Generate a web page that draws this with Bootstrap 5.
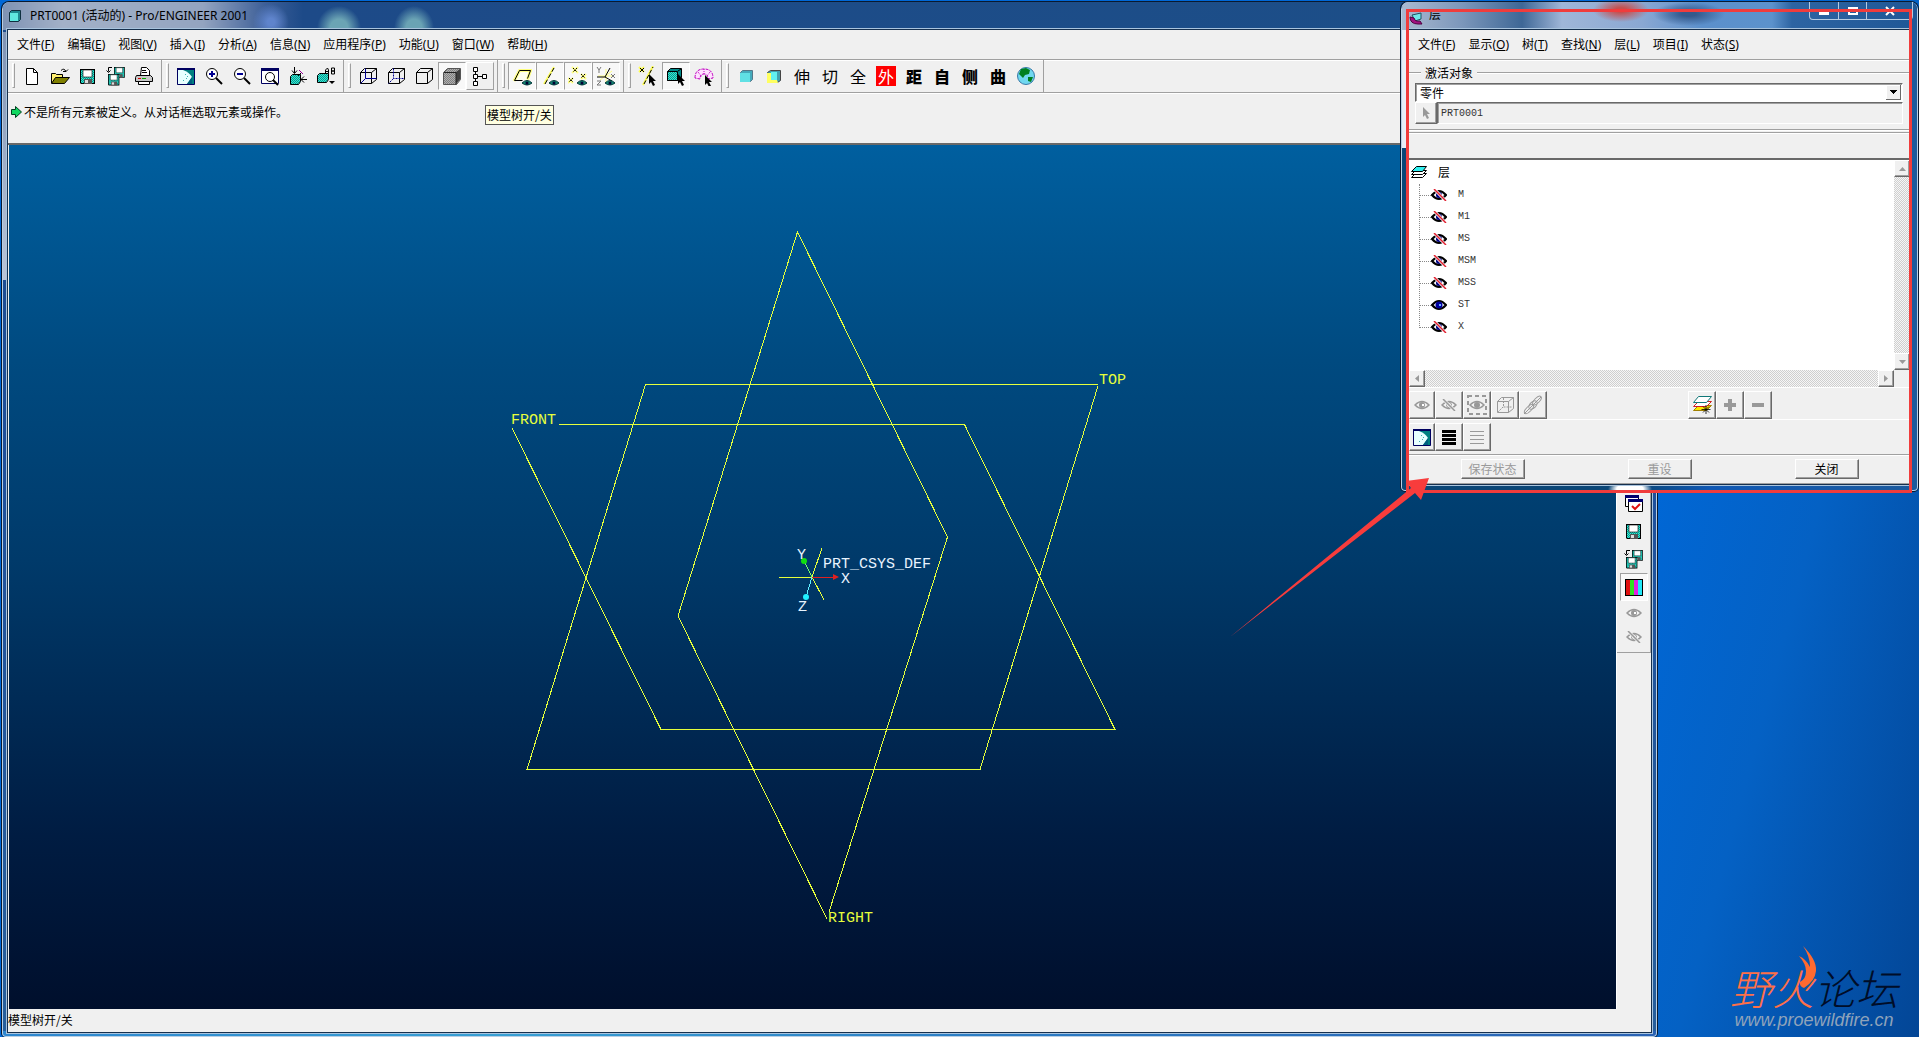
<!DOCTYPE html>
<html lang="zh-CN">
<head>
<meta charset="utf-8">
<meta name="viewport" content="width=device-width, initial-scale=1">
<title>PRT0001 (活动的) - Pro/ENGINEER 2001</title>
<link href="https://cdn.jsdelivr.net/npm/bootstrap@5.3.0/dist/css/bootstrap.min.css" rel="stylesheet">
<style>
:root{--face:#f0f0f0;--shade:#a0a0a0;--dark:#696969;--wire:#e6ff3c;--red:#f03c3c}
body{font:12px/16px "Noto Sans","Noto Sans CJK SC",sans-serif;color:#000;background:#0459b8}
.cjk{font-family:"Noto Sans CJK SC",sans-serif}
button{font:inherit;color:inherit;background:none;border:0;padding:0}
svg{display:block;flex:none}
.desktop{background:linear-gradient(105deg,#0068d8 80%,#0461c4 89%,#034696 100%)}
.aero{border-radius:7px 7px 4px 4px}
.aero{box-shadow:0 0 0 1px #0a1a30,inset 0 0 0 1px #b9cfe4}
.main-win{left:2px;top:2px;right:262px;bottom:0;padding:0 6px 5px;
 background:linear-gradient(#7f93b4,#b9c4d6) 1px 30px/5px 248px no-repeat,
 linear-gradient(90deg,#2d86cf,#38a0d4 30%,#2b7cc4 60%,#2a62b4) 0 100%/100% 6px no-repeat,
 linear-gradient(#1c4a88,#1d4f9c 45%,#265f9c)}
.main-title{height:28px;margin:0 -5px;padding-left:5px;border-radius:6px 6px 0 0;
 background:radial-gradient(ellipse 22px 22px at 336px 26px,#6ba4b4 40%,transparent),
 radial-gradient(ellipse 20px 22px at 411px 26px,#6aa3b4 40%,transparent),
 radial-gradient(ellipse 18px 18px at 268px 20px,#5f84cc 20%,transparent),
 linear-gradient(90deg,#7f93b4,#a3b1c8 60px,#93a4c0 200px,#3d5f98 262px,#1d4a88 300px,#1c4f88)}
.client{background:var(--face);box-shadow:0 0 0 1px #16304e,0 0 0 2px #a9c4de}
.menu{height:29px;padding:1px 9px 0;gap:13px}
.strip{border-top:1px solid var(--shade);box-shadow:inset 0 1px #fff}
.tool-group{padding:2px 3px 2px 10px;border-right:1px solid var(--shade);position:relative}
.tool-group::before{content:"";position:absolute;left:4px;top:3px;bottom:4px;width:3px;border:1px solid #fff;border-right-color:var(--shade);border-bottom-color:var(--shade)}
.tool{width:28px;height:28px;display:flex;align-items:center;justify-content:center;border:1px solid transparent}
.tool.down{border-color:var(--shade) #fff #fff var(--shade);background:#f8f8f8}
.tool.up{border-color:#fff var(--shade) var(--shade) #fff}
.glyph{font-size:16px;line-height:20px}
.glyph.heavy{font-weight:900}
.glyph span{display:block;width:20px}
.glyph .hot{background:#f00;color:#fff}
.message{height:53px;padding:11px 2px 0;border-top:1px solid var(--shade);border-bottom:2px solid var(--dark);box-shadow:inset 0 1px #fff}
.hint{left:477px;top:12px;height:20px;padding:1px;line-height:16px;background:#ffffe1;border:1px solid #555}
.view{margin-left:1px;background:linear-gradient(#005f9f,#004a80 25%,#003a6a 48%,#001c42 80%,#000f2c)}
.view text{font-family:"Liberation Mono",monospace;font-size:15px}
.side{width:35px;border-left:1px solid #fff}
.side-tools{padding:344px 3px 3px;border-bottom:1px solid var(--shade);border-right:1px solid var(--shade)}
.side-tools .short-btn{height:24px}
.status{height:23px;padding-top:3px}
.dialog{right:1px;top:2px;width:517px;padding:0 8px 7px;
 background:linear-gradient(90deg,#e4ecf6,#eef3fa) 1px 28px/7px 118px no-repeat,
 radial-gradient(ellipse 22px 9px at 229px 487px,#fff 60%,transparent),
 linear-gradient(90deg,#0b4676 0,#0b4676 45%,#1058b4 60%,#1c5a9c)}
.dlg-title{height:28px;margin:0 -7px;padding-left:7px;border-radius:6px 6px 0 0;
 background:radial-gradient(ellipse 28px 12px at 219px 8px,#c4504f 20%,transparent),
 radial-gradient(ellipse 36px 12px at 287px 12px,#33598c 20%,transparent),
 linear-gradient(90deg,#a9b9d0,#7c97bb 60px,#3e6796 120px,#9fb6d8 160px,#8aa8d2 240px,#5b90cc 300px,#5c92cc 370px,#2d64a2 390px,#1f5796)}
.caption{height:18px;margin-right:4px;border:1px solid #b5cbe2;border-top:0;border-radius:0 0 4px 4px;color:#fff}
.caption button{width:28px;display:flex;justify-content:center;align-items:center}
.caption button+button{border-left:1px solid #b5cbe2}
.caption button:last-child{width:46px}
.red-frame{left:5px;top:7px;right:6px;bottom:-2px;border:3px solid var(--red);pointer-events:none}
.active-set{border-top:1px solid var(--shade);box-shadow:inset 0 1px #fff;margin-top:12px;padding:10px 7px 5px 6px;position:relative}
.active-set legend{position:absolute;left:12px;top:-9px;width:auto;margin:0;padding:0 4px;font-size:12px;line-height:18px;background:var(--face)}
.sunken{border:1px solid;border-color:var(--dark) #fff #fff var(--dark);box-shadow:inset 1px 1px var(--shade)}
.drop{position:relative}
.drop select{appearance:none;width:100%;height:19px;padding:0 4px;background:#fff;border-radius:0;font:inherit;color:#000;line-height:15px}
.drop::after{content:"";position:absolute;right:2px;top:2px;width:15px;height:15px;pointer-events:none;
 background:linear-gradient(#000,#000) 4px 5px/7px 1px no-repeat,linear-gradient(#000,#000) 5px 6px/5px 1px no-repeat,linear-gradient(#000,#000) 6px 7px/3px 1px no-repeat,linear-gradient(#000,#000) 7px 8px/1px 1px no-repeat,var(--face);
 box-shadow:inset -1px -1px var(--dark),inset 1px 1px #fff}
.part{height:22px;min-width:0;padding:0 3px;background:var(--face);border-radius:0;outline:0;font:10px/16px "Liberation Mono",monospace;color:#333}
.raised{background:var(--face);border:1px solid;border-color:#fff var(--dark) var(--dark) #fff;box-shadow:inset -1px -1px var(--shade);display:flex;align-items:center;justify-content:center}
.raised:disabled{color:#9a9a9a}
.pick{width:22px;height:22px}
.panel{height:28px;margin-top:2px;border-top:1px solid var(--shade);border-bottom:2px solid var(--dark);box-shadow:inset 0 1px #fff}
.tree{height:210px;background:#fff;overflow:hidden}
.tree ul{margin:0 0 0 10px;padding:0;list-style:none;position:relative}
.tree ul::before{content:"";position:absolute;left:0;top:0;height:144px;border-left:1px dotted #888}
.tree li{height:22px;display:flex;align-items:center;font:10px/16px "Liberation Mono",monospace;color:#333}
.tree li::before{content:"";width:12px;border-top:1px dotted #888}
.tree li svg{margin-right:11px}
.tree-root{height:24px;gap:10px;padding-left:1px}
.track{background:repeating-conic-gradient(#cfcfcf 0 25%,#f6f6f6 0 50%) 0 0/2px 2px}
.track button{width:16px;height:17px;color:#8a8a8a}
.layer-tools{border-top:1px solid #fff;padding-top:3px}
.layer-tools .raised{width:28px;height:28px}
.layer-tools .raised.edge{width:26px}
.left-tools{width:279px}
.actions{margin-top:3px;padding:4px 0;border-top:1px solid var(--shade);border-bottom:1px solid var(--shade);box-shadow:inset 0 1px #fff}
.actions .raised{width:64px;height:20px}
.arrow{left:1225px;top:470px}
.brand{right:20px;bottom:7px;width:170px;text-align:center}
.brand-name{font:italic 300 42px/46px "Noto Sans CJK SC",sans-serif;color:#000d28}
.brand-name b{font-weight:300;color:#ff7048}
.brand-flame{left:68px;top:-18px}
.brand-url{font:italic 18px/20px "Liberation Sans",sans-serif;color:#8fa3ba;text-decoration:none}
</style>
<script src="https://cdn.jsdelivr.net/npm/bootstrap@5.3.0/dist/js/bootstrap.bundle.min.js"></script>
</head>
<body class="desktop vh-100 overflow-hidden position-relative">

<svg width="0" height="0" class="position-absolute" aria-hidden="true">
<defs>
<pattern id="teal" width="2" height="2" patternUnits="userSpaceOnUse"><rect width="2" height="2" fill="#40e0d0"/><path d="M0 0h1v1H0zM1 1h1v1H1z" fill="#00a090"/></pattern>
<pattern id="grey" width="2" height="2" patternUnits="userSpaceOnUse"><rect width="2" height="2" fill="#b0b0b0"/><path d="M0 0h1v1H0zM1 1h1v1H1z" fill="#808080"/></pattern>
<g id="disk"><path d="M0 0h15v15H1l-1-1z" fill="#000"/><path d="M1 1h13v13H1z" fill="url(#teal)"/><path d="M3 1h9v7H3z" fill="#fff" stroke="#000" stroke-width=".6"/><path d="M4 10h8v5H4z" fill="#555"/><path d="M5 11h3v3H5z" fill="#ddd"/></g>
<symbol id="new" viewBox="0 0 20 20"><path d="M4.500 2.500h7l4 4v12h-11z" fill="#fff" stroke="#000"/><path d="M11.500 2.500v4h4" fill="none" stroke="#000"/></symbol>
<symbol id="open" viewBox="0 0 20 20"><path d="M1.500 17V7.500h4l1 1h6v3" fill="#ffef70" stroke="#000"/><path d="M1.500 17.500l4-6h14l-5 6z" fill="#808000" stroke="#000"/><path d="M11 4.500q3-3 5 1l2-2m-2 2h-3" fill="none" stroke="#000"/></symbol>
<symbol id="save" viewBox="0 0 20 20"><use href="#disk" x="2" y="3"/></symbol>
<symbol id="saveas" viewBox="0 0 20 20"><g transform="translate(8 1) scale(.72)"><use href="#disk"/></g><g transform="translate(2 8) scale(.76)"><use href="#disk"/></g><path d="M6 1.500H2.500v4M.500 4.500l2 2 2-2" fill="none" stroke="#000"/></symbol>
<symbol id="print" viewBox="0 0 20 20"><path d="M6.500 9.500l1-8h5l3 3v5" fill="#fff" stroke="#000"/><path d="M8 4.500h4M8 6.500h5" stroke="#000"/><path d="M2.500 9.500h14l2 2v4h-17v-4z" fill="#c8c8c8" stroke="#000"/><path d="M4.500 15.500h11v3h-11z" fill="#fff" stroke="#000"/><path d="M4 12.500h3" stroke="#d00"/><path d="M8 12.500h4" stroke="#0a0"/></symbol>
<symbol id="repaint" viewBox="0 0 20 20"><path d="M1.500 2.500h17v16h-17z" fill="#008080" stroke="#000060" stroke-width="1"/><path d="M1 2h18v2H1z" fill="#000060"/><path d="M2 4h5q6 2 9 7l-5 7H2z" fill="#e8ffff"/><path d="M11 18l5-7v7z" fill="#006080"/><path d="M9 8h1v1H9zM11 10h1v1h-1zM10 12h1v1h-1zM7 14h1v1H7z" fill="#40b0b0"/></symbol>
<symbol id="zoomin" viewBox="0 0 20 20"><circle cx="8" cy="8" r="5.500" fill="#fff" stroke="#000"/><path d="M8 5v6M5 8h6" stroke="#000090" stroke-width="2"/><path d="M12 12l6 6" stroke="#000" stroke-width="2"/></symbol>
<symbol id="zoomout" viewBox="0 0 20 20"><circle cx="8" cy="8" r="5.500" fill="#fff" stroke="#000"/><path d="M5 8h6" stroke="#000090" stroke-width="2"/><path d="M12 12l6 6" stroke="#000" stroke-width="2"/></symbol>
<symbol id="refit" viewBox="0 0 20 20"><path d="M1.500 2.500h17v15h-17z" fill="#fff" stroke="#000060"/><path d="M1 2h18v3H1z" fill="#000060"/><circle cx="10" cy="11" r="4.500" fill="#fff" stroke="#000"/><path d="M13 14l5 5" stroke="#000" stroke-width="2"/></symbol>
<symbol id="orient" viewBox="0 0 20 20"><path d="M2.500 10.500l2-2h8v7l-2 3h-8z" fill="url(#teal)" stroke="#000"/><path d="M6.500 1v6M4 4.500l2.500 3 2.500-3M19 13.500h-6m3-3l-3 3 3 3M13 7l-3 3" fill="none" stroke="#000"/><path d="M11 4l4 4" stroke="#909"/></symbol>
<symbol id="views" viewBox="0 0 20 20"><path d="M1.500 9.500l2-2h9v6l-2 3h-9z" fill="url(#teal)" stroke="#000"/><path d="M9.500 7.500V4l2-2 1 2v3.500M9.500 5.500h3M15.500 2v6h3V5h-3 3V2z" fill="none" stroke="#000"/><path d="M13 15h6l-3 3z"/></symbol>
<symbol id="wire" viewBox="0 0 20 20"><path d="M2.500 6.500h11v11h-11zM2.500 6.500l4-4h12l-5 4M18.500 2.500v11l-5 4" fill="none" stroke="#000"/><path d="M7.500 2.500v10h11M7.500 12.500l-5 5" fill="none" stroke="#000090"/></symbol>
<symbol id="hidden" viewBox="0 0 20 20"><path d="M2.500 6.500h11v11h-11zM2.500 6.500l4-4h12l-5 4M18.500 2.500v11l-5 4" fill="none" stroke="#000"/><path d="M7.500 2.500v10h11M7.500 12.500l-5 5" fill="none" stroke="#000090" stroke-dasharray="2 1"/></symbol>
<symbol id="nohidden" viewBox="0 0 20 20"><path d="M2.500 6.500h11v11h-11zM2.500 6.500l4-4h12l-5 4M18.500 2.500v11l-5 4" fill="none" stroke="#000"/></symbol>
<symbol id="shaded" viewBox="0 0 20 20"><path d="M1.500 6.500l4-4h13v11l-4 5h-13z" fill="url(#grey)" stroke="#555"/><path d="M14 6l4-3v10l-4 5z" fill="#404040"/><path d="M2 6.500h12v12" fill="none" stroke="#222"/></symbol>
<symbol id="treeicon" viewBox="0 0 20 20"><path d="M3.500 1.500h4v4h-4zM3.500 8.500h4v4h-4zM3.500 15.500h4v4h-4zM12.500 8.500h4v4h-4zM5.500 6v2M5.500 13v2M8 10.500h4" fill="#fff" stroke="#000"/></symbol>
<g id="see"><path d="M0 3q5-5 10 0q-5 4-10 0z" fill="#108070" stroke="#003838"/><circle cx="5" cy="3" r="1.500" fill="#003"/></g>
<symbol id="planes" viewBox="0 0 20 20"><path d="M2 15L7.500 4.500h11l-3 9" fill="#fffff0" stroke="#ffff80" stroke-width="3"/><path d="M2.500 14.500l5-10h11l-3 8M2.500 14.500h8" fill="none" stroke="#000"/><use href="#see" x="10" y="14"/></symbol>
<symbol id="axes" viewBox="0 0 20 20"><path d="M4 18L14 1" stroke="#ffff60" stroke-width="2"/><path d="M5 18L14 2" stroke="#000" stroke-dasharray="5 2"/><use href="#see" x="9" y="14"/></symbol>
<symbol id="points" viewBox="0 0 20 20"><path d="M4 1l6 6m0-6L4 7M0 12l5 5m0-5l-5 5M13 8l5 5m0-5l-5 5" stroke="#ffff80" stroke-width="2"/><path d="M5 2l4 4m0-4L5 6M1 12l4 4m0-4l-4 4M13 8l4 4m0-4l-4 4" stroke="#000" stroke-dasharray="2 1"/><use href="#see" x="9" y="14"/></symbol>
<symbol id="csys" viewBox="0 0 20 20"><path d="M10 3v13M4 14l12-9M2 10h14" stroke="#ffff80"/><path d="M9 11l5-9M9 11H1M9 11l7 4" stroke="#000"/><path d="M1 1l2 3 2-3M3 4v3M15 8l4 4m0-4l-4 4M1 15h4l-4 4h4" fill="none" stroke="#777"/><use href="#see" x="9" y="14"/></symbol>
<path id="ptr" d="M0 0l7 7H4l2 4-2 1-2-4-2 2z"/>
<symbol id="pickdatum" viewBox="0 0 20 20"><path d="M5 19L15 0M1 1l5 5m0-5L1 6" stroke="#ffff50" stroke-width="2"/><path d="M6 18L15 1" stroke="#000" stroke-dasharray="4 2"/><path d="M2 2l4 4m0-4L2 6" stroke="#000"/><use href="#ptr" x="11" y="8"/></symbol>
<symbol id="pickbox" viewBox="0 0 20 20"><path d="M1.500 5.500l3-3h11v9l-3 3h-11z" fill="#088" stroke="#000"/><path d="M1.500 5.500h10v9h-10z" fill="url(#teal)" stroke="#000"/><path d="M12 5l3-2" stroke="#000"/><use href="#ptr" x="12" y="8"/></symbol>
<symbol id="pickquilt" viewBox="0 0 20 20"><path d="M1 12Q1 3 10 3q9 0 9 9l-5 1q0-5-4-5t-4 5z" fill="#ffe0ff" stroke="#c000c0" stroke-dasharray="3 1"/><path d="M4 6l4 5M10 3v5M16 6l-3 4" stroke="#c000c0" stroke-dasharray="1 1"/><use href="#ptr" x="11" y="9"/></symbol>
<symbol id="solid" viewBox="0 0 20 20"><path d="M4.500 6.500l2-2h10v9l-2 2h-10z" fill="#4ab" stroke="#578"/><path d="M4 7h10v9H4z" fill="#60e0e4"/></symbol>
<symbol id="solidcut" viewBox="0 0 20 20"><path d="M3.500 6.500l3-2h10v10l-3 2h-10z" fill="#40a0b0" stroke="#444"/><path d="M3 7h4v7h6l1 3H3z" fill="#ffff60"/><path d="M7 6h6v8H7z" fill="#60f0f0"/></symbol>
<symbol id="globe" viewBox="0 0 20 20"><circle cx="10" cy="10" r="8.500" fill="#70d8f0" stroke="#3878a8"/><path d="M5 3l5-1 4 2-1 4-4 1-2 3-4-4zM12 11l5 0-2 5-3-1z" fill="#008020"/></symbol>
<symbol id="eye" viewBox="0 0 16 12"><path d="M1 6q7-8 14 0q-7 8-14 0z" fill="#fff" stroke="#000" stroke-width="2"/><circle cx="8" cy="6" r="3.500" fill="#0000a0"/><path d="M8 5h2v2H8z" fill="#60b0ff"/></symbol>
<symbol id="noeye" viewBox="0 0 16 12"><path d="M1 6q7-8 14 0q-7 8-14 0z" fill="#fff" stroke="#000" stroke-width="2"/><circle cx="8" cy="6" r="3" fill="#000080"/><path d="M3 0l12 12" stroke="#fff" stroke-width="3"/><path d="M3 0l12 12" stroke="#e02030" stroke-width="1.500"/></symbol>
<symbol id="geye" viewBox="0 0 16 12"><path d="M1 6q7-7 14 0q-7 7-14 0z" fill="#f4f4f4" stroke="#999" stroke-width="1.500"/><circle cx="8" cy="6" r="3" fill="#999"/><path d="M8 5h2v2H8z" fill="#fff"/></symbol>
<symbol id="gnoeye" viewBox="0 0 16 12"><path d="M1 6q7-7 14 0q-7 7-14 0z" fill="#f4f4f4" stroke="#999" stroke-width="1.500"/><circle cx="8" cy="6" r="2.500" fill="none" stroke="#999"/><path d="M2 0l12 12" stroke="#f0f0f0" stroke-width="3"/><path d="M2 0l12 12" stroke="#999" stroke-width="1.500"/></symbol>
<symbol id="geyebox" viewBox="0 0 20 20"><path d="M1 1h18v18H1z" fill="none" stroke="#999" stroke-width="2" stroke-dasharray="4 3"/><path d="M3 10q7-7 14 0q-7 7-14 0z" fill="#f4f4f4" stroke="#999" stroke-width="1.500"/><circle cx="10" cy="10" r="3" fill="#999"/></symbol>
<symbol id="gbox" viewBox="0 0 20 20"><path d="M2.500 6.500h11v11h-11zM2.500 6.500l4-4h12l-5 4M18.500 2.500v11l-5 4" fill="none" stroke="#999"/><path d="M8.500 3v9h9M8 12l-5 5" fill="none" stroke="#999" stroke-dasharray="2 1"/></symbol>
<symbol id="glink" viewBox="0 0 20 20"><g fill="none" stroke="#999"><ellipse cx="14" cy="5.500" rx="5.500" ry="2.500" transform="rotate(-45 14 5.500)"/><ellipse cx="6" cy="14" rx="6" ry="2.500" transform="rotate(-45 6 14)"/><ellipse cx="10" cy="10" rx="5" ry="3" transform="rotate(-45 10 10)"/><path d="M1 19L18 2"/></g></symbol>
<symbol id="newlayer" viewBox="0 0 20 20"><path d="M1.500 15.500l5-5h13l-5 5z" fill="#ffe800" stroke="#a08000"/><path d="M1.500 11.500l5-5h13l-5 5z" fill="#fff" stroke="#d02020"/><path d="M1.500 7.500l5-6h13l-5 6z" fill="#fff" stroke="#107878"/><path d="M14 10v9M9.500 14.500h9M11 11.500l6 6m0-6l-6 6" stroke="#000" stroke-width=".8"/></symbol>
<symbol id="layers" viewBox="0 0 18 14"><path d="M1.500 12.500l4-4h11l-4 4z" fill="#fff" stroke="#000"/><path d="M1.500 9.500l4-4h11l-4 4z" fill="#fff" stroke="#000"/><path d="M1.500 6.500l5-5h10l-4 5z" fill="#30f0f0" stroke="#000"/></symbol>
<symbol id="windows" viewBox="0 0 20 20"><path d="M1.500 2.500h13v11h-13z" fill="#fff" stroke="#000"/><path d="M1 2h14v3H1z" fill="#000070"/><path d="M4.500 6.500h14v12h-14z" fill="#fff" stroke="#000"/><path d="M4 6h15v3H4z" fill="#000070"/><path d="M8 13l3 3 5-5" fill="none" stroke="#e01010" stroke-width="2"/></symbol>
<symbol id="bars" viewBox="0 0 20 20"><path d="M1 2h18v17H1z"/><path d="M2 3h4v15H2z" fill="#e01010"/><path d="M6 3h4v15H6z" fill="#30e020"/><path d="M10 3h4v15h-4z" fill="#e020e0"/><path d="M14 3h4v15h-4z" fill="#20e8f8"/></symbol>
</defs>
</svg>

<!-- forum brand on the wallpaper -->
<div class="brand position-absolute">
  <div class="brand-name text-nowrap"><b>野火</b>论坛</div>
  <svg class="brand-flame position-absolute" width="20" height="42" viewBox="0 0 20 42"><path d="M6 0q14 14 13 25q-1 10-12 17q-5-2-4-6q6-3 6-11q0-7-7-15q7 3 11 11q0-11-7-21z" fill="#ff6a30"/></svg>
  <a class="brand-url d-block" href="#">www.proewildfire.cn</a>
</div>

<!-- main application window -->
<main class="main-win aero position-absolute d-flex flex-column">
  <header class="main-title d-flex align-items-center flex-shrink-0">
    <svg width="14" height="14" viewBox="0 0 14 14" class="me-2"><path d="M1.500 3.500l2-2h9v9l-2 2h-9z" fill="#208890" stroke="#103040"/><path d="M2 4h8v8H2z" fill="#60e8e0"/></svg>
    <span>PRT0001 (活动的) - Pro/ENGINEER 2001</span>
  </header>
  <div class="client flex-grow-1 d-flex flex-column">
    <nav class="menu d-flex align-items-center flex-shrink-0">
      <button>文件(<u>F</u>)</button><button>编辑(<u>E</u>)</button><button>视图(<u>V</u>)</button><button>插入(<u>I</u>)</button><button>分析(<u>A</u>)</button><button>信息(<u>N</u>)</button><button>应用程序(<u>P</u>)</button><button>功能(<u>U</u>)</button><button>窗口(<u>W</u>)</button><button>帮助(<u>H</u>)</button>
    </nav>
    <div class="strip d-flex flex-shrink-0" role="toolbar" aria-label="工具栏">
      <div class="tool-group d-flex">
        <button class="tool" aria-label="新建"><svg width="20" height="20"><use href="#new"/></svg></button>
        <button class="tool" aria-label="打开"><svg width="20" height="20"><use href="#open"/></svg></button>
        <button class="tool" aria-label="保存"><svg width="20" height="20"><use href="#save"/></svg></button>
        <button class="tool" aria-label="保存副本"><svg width="20" height="20"><use href="#saveas"/></svg></button>
        <button class="tool" aria-label="打印"><svg width="20" height="20"><use href="#print"/></svg></button>
      </div>
      <div class="tool-group d-flex">
        <button class="tool" aria-label="重画"><svg width="20" height="20"><use href="#repaint"/></svg></button>
        <button class="tool" aria-label="放大"><svg width="20" height="20"><use href="#zoomin"/></svg></button>
        <button class="tool" aria-label="缩小"><svg width="20" height="20"><use href="#zoomout"/></svg></button>
        <button class="tool" aria-label="重新调整"><svg width="20" height="20"><use href="#refit"/></svg></button>
        <button class="tool" aria-label="定向"><svg width="20" height="20"><use href="#orient"/></svg></button>
        <button class="tool" aria-label="视图列表"><svg width="20" height="20"><use href="#views"/></svg></button>
      </div>
      <div class="tool-group d-flex">
        <button class="tool" aria-label="线框"><svg width="20" height="20"><use href="#wire"/></svg></button>
        <button class="tool" aria-label="隐藏线"><svg width="20" height="20"><use href="#hidden"/></svg></button>
        <button class="tool" aria-label="无隐藏线"><svg width="20" height="20"><use href="#nohidden"/></svg></button>
        <button class="tool down" aria-label="着色"><svg width="20" height="20"><use href="#shaded"/></svg></button>
        <button class="tool up" aria-label="模型树"><svg width="20" height="20"><use href="#treeicon"/></svg></button>
      </div>
      <div class="tool-group d-flex">
        <button class="tool down" aria-label="基准平面"><svg width="20" height="20"><use href="#planes"/></svg></button>
        <button class="tool down" aria-label="基准轴"><svg width="20" height="20"><use href="#axes"/></svg></button>
        <button class="tool down" aria-label="基准点"><svg width="20" height="20"><use href="#points"/></svg></button>
        <button class="tool down" aria-label="坐标系"><svg width="20" height="20"><use href="#csys"/></svg></button>
      </div>
      <div class="tool-group d-flex">
        <button class="tool" aria-label="选取基准"><svg width="20" height="20"><use href="#pickdatum"/></svg></button>
        <button class="tool down" aria-label="选取几何"><svg width="20" height="20"><use href="#pickbox"/></svg></button>
        <button class="tool" aria-label="选取面组"><svg width="20" height="20"><use href="#pickquilt"/></svg></button>
      </div>
      <div class="tool-group d-flex cjk">
        <button class="tool" aria-label="伸出项"><svg width="20" height="20"><use href="#solid"/></svg></button>
        <button class="tool" aria-label="切口"><svg width="20" height="20"><use href="#solidcut"/></svg></button>
        <button class="tool glyph"><span>伸</span></button>
        <button class="tool glyph"><span>切</span></button>
        <button class="tool glyph"><span>全</span></button>
        <button class="tool glyph"><span class="hot">外</span></button>
        <button class="tool glyph heavy"><span>距</span></button>
        <button class="tool glyph heavy"><span>自</span></button>
        <button class="tool glyph heavy"><span>侧</span></button>
        <button class="tool glyph heavy"><span>曲</span></button>
        <button class="tool" aria-label="网络"><svg width="20" height="20"><use href="#globe"/></svg></button>
      </div>
    </div>
    <div class="message cjk position-relative flex-shrink-0">
      <div class="d-flex align-items-center">
        <svg width="14" height="14" viewBox="0 0 14 14"><path d="M1.500 4.500h4v-3l6 5.500-6 5.500v-3h-4z" fill="#10d860" stroke="#004020"/></svg>
        <span>不是所有元素被定义。从对话框选取元素或操作。</span>
      </div>
      <div class="hint position-absolute text-nowrap" role="tooltip">模型树开/关</div>
    </div>
    <div class="d-flex flex-grow-1 overflow-hidden">
      <div class="view flex-grow-1 overflow-hidden">
        <svg width="100%" height="100%" viewBox="9 145 1607 864" aria-label="模型视图">
          <g fill="none" stroke="#e6ff3c" shape-rendering="crispEdges">
            <path d="M559 424.500H964.500L1115 729.500H661L512 428"/>
            <path d="M1098 384.500H645.500L527 769.500H980L1098 386"/>
            <path d="M829 912L947.500 537L797.500 232L678 616L827 919"/>
            <path d="M779 577.500H812M812 577L822 548M812 577L824 600"/>
            <path d="M812 577L804 561" stroke="#7f6"/>
            <path d="M812 577.500H834" stroke="#e02020"/>
            <path d="M812 577L806 597" stroke="#60f0ff"/>
          </g>
          <circle cx="804" cy="561" r="3" fill="#10e010"/><circle cx="806" cy="597" r="3" fill="#20f0ff"/><path d="M833 574l6 3-6 3z" fill="#e02020"/>
          <g fill="#e6ff3c"><text x="511" y="424">FRONT</text><text x="1099" y="384">TOP</text><text x="828" y="922">RIGHT</text></g>
          <g fill="#e8f4ff"><text x="823" y="568">PRT_CSYS_DEF</text><text x="797" y="559">Y</text><text x="841" y="583">X</text><text x="798" y="611">Z</text></g>
        </svg>
      </div>
      <aside class="side flex-shrink-0">
        <div class="side-tools d-flex flex-column">
          <button class="tool" aria-label="窗口"><svg width="20" height="20"><use href="#windows"/></svg></button>
          <button class="tool" aria-label="保存"><svg width="20" height="20"><use href="#save"/></svg></button>
          <button class="tool" aria-label="保存副本"><svg width="20" height="20"><use href="#saveas"/></svg></button>
          <button class="tool down" aria-label="颜色"><svg width="20" height="20"><use href="#bars"/></svg></button>
          <button class="tool short-btn" aria-label="显示" disabled><svg width="16" height="12"><use href="#geye"/></svg></button>
          <button class="tool short-btn" aria-label="隐藏" disabled><svg width="16" height="12"><use href="#gnoeye"/></svg></button>
        </div>
      </aside>
    </div>
    <footer class="status cjk flex-shrink-0">模型树开/关</footer>
  </div>
</main>

<!-- layer dialog -->
<section class="dialog aero position-absolute" aria-label="层">
  <header class="dlg-title d-flex">
    <svg width="16" height="16" viewBox="0 0 16 16" class="mt-2"><path d="M3 5l9-2v6l-6 2z" fill="#70e8e8" stroke="#205060"/><path d="M1 7q0 7 8 7h4l-2-3q-5 1-6-3z" fill="#a01080" stroke="#500040"/></svg>
    <span class="cjk ms-1 mt-1">层</span>
    <div class="caption d-flex ms-auto">
      <button aria-label="最小化"><svg width="12" height="10"><path d="M1 6h10v3H1z" fill="#fff"/></svg></button>
      <button aria-label="最大化"><svg width="12" height="10"><path d="M2 2h8v6H2z" fill="none" stroke="#fff" stroke-width="2"/></svg></button>
      <button aria-label="关闭窗口"><svg width="12" height="10"><path d="M2 1l8 8m0-8L2 9" stroke="#fff" stroke-width="2"/></svg></button>
    </div>
  </header>
  <div class="client">
    <nav class="menu d-flex align-items-center">
      <button>文件(<u>F</u>)</button><button>显示(<u>O</u>)</button><button>树(<u>T</u>)</button><button>查找(<u>N</u>)</button><button>层(<u>L</u>)</button><button>项目(<u>I</u>)</button><button>状态(<u>S</u>)</button>
    </nav>
    <div class="strip cjk">
      <fieldset class="active-set">
        <legend>激活对象</legend>
        <div class="drop"><select class="sunken" aria-label="激活对象"><option>零件</option></select></div>
        <div class="d-flex">
          <button class="raised pick" aria-label="选取" disabled><svg width="12" height="14" viewBox="-2 -1 10 14"><use href="#ptr" fill="#999"/></svg></button>
          <input class="part sunken flex-grow-1" aria-label="对象名称" value="PRT0001" readonly>
        </div>
      </fieldset>
    </div>
    <div class="strip"><div class="panel"></div></div>
    <div class="d-flex">
      <div class="tree flex-grow-1">
        <div class="tree-root cjk d-flex align-items-center"><svg width="18" height="14"><use href="#layers"/></svg>层</div>
        <ul>
          <li><svg width="16" height="12"><use href="#noeye"/></svg>M</li>
          <li><svg width="16" height="12"><use href="#noeye"/></svg>M1</li>
          <li><svg width="16" height="12"><use href="#noeye"/></svg>MS</li>
          <li><svg width="16" height="12"><use href="#noeye"/></svg>MSM</li>
          <li><svg width="16" height="12"><use href="#noeye"/></svg>MSS</li>
          <li><svg width="16" height="12"><use href="#eye"/></svg>ST</li>
          <li><svg width="16" height="12"><use href="#noeye"/></svg>X</li>
        </ul>
      </div>
      <div class="track d-flex flex-column justify-content-between">
        <button class="raised" aria-label="向上"><svg width="7" height="4"><path d="M0 4l3.500-4L7 4z" fill="#999"/></svg></button>
        <button class="raised" aria-label="向下"><svg width="7" height="4"><path d="M0 0l3.500 4L7 0z" fill="#999"/></svg></button>
      </div>
    </div>
    <div class="track d-flex justify-content-between me-3">
      <button class="raised" aria-label="向左"><svg width="4" height="7"><path d="M4 0L0 3.500 4 7z" fill="#999"/></svg></button>
      <button class="raised" aria-label="向右"><svg width="4" height="7"><path d="M0 0l4 3.500L0 7z" fill="#999"/></svg></button>
    </div>
    <div class="layer-tools d-flex">
      <div class="left-tools d-flex">
        <button class="raised edge" aria-label="显示层" disabled><svg width="16" height="12"><use href="#geye"/></svg></button>
        <button class="raised" aria-label="遮蔽层" disabled><svg width="16" height="12"><use href="#gnoeye"/></svg></button>
        <button class="raised" aria-label="隔离层" disabled><svg width="20" height="20"><use href="#geyebox"/></svg></button>
        <button class="raised" aria-label="隐藏线层" disabled><svg width="20" height="20"><use href="#gbox"/></svg></button>
        <button class="raised" aria-label="链接" disabled><svg width="20" height="20"><use href="#glink"/></svg></button>
      </div>
      <button class="raised" aria-label="新建层"><svg width="20" height="20"><use href="#newlayer"/></svg></button>
      <button class="raised" aria-label="添加" disabled><svg width="12" height="12"><path d="M4 0h4v4h4v4H8v4H4V8H0V4h4z" fill="#999"/></svg></button>
      <button class="raised" aria-label="移除" disabled><svg width="12" height="4"><path d="M0 0h12v4H0z" fill="#999"/></svg></button>
    </div>
    <div class="layer-tools d-flex">
      <button class="raised edge" aria-label="重画"><svg width="20" height="20"><use href="#repaint"/></svg></button>
      <button class="raised" aria-label="全选"><svg width="14" height="15"><path d="M0 0h14v3H0zM0 4h14v3H0zM0 8h14v3H0zM0 12h14v3H0z"/></svg></button>
      <button class="raised" aria-label="全不选" disabled><svg width="14" height="15"><path d="M0 1h14v1H0zM0 5h14v1H0zM0 9h14v1H0zM0 13h14v1H0z" fill="#999"/></svg></button>
    </div>
    <div class="actions cjk row g-0">
      <div class="col d-flex justify-content-center"><button class="raised" disabled>保存状态</button></div>
      <div class="col d-flex justify-content-center"><button class="raised" disabled>重设</button></div>
      <div class="col d-flex justify-content-center"><button class="raised">关闭</button></div>
    </div>
  </div>
  <div class="red-frame position-absolute"></div>
</section>

<svg class="arrow position-absolute" width="210" height="172" viewBox="1225 470 210 172" aria-hidden="true"><path d="M1429 478l-23 3 5 7-181 149 185-144 6 7z" fill="#f83c3c"/></svg>
</body>
</html>
